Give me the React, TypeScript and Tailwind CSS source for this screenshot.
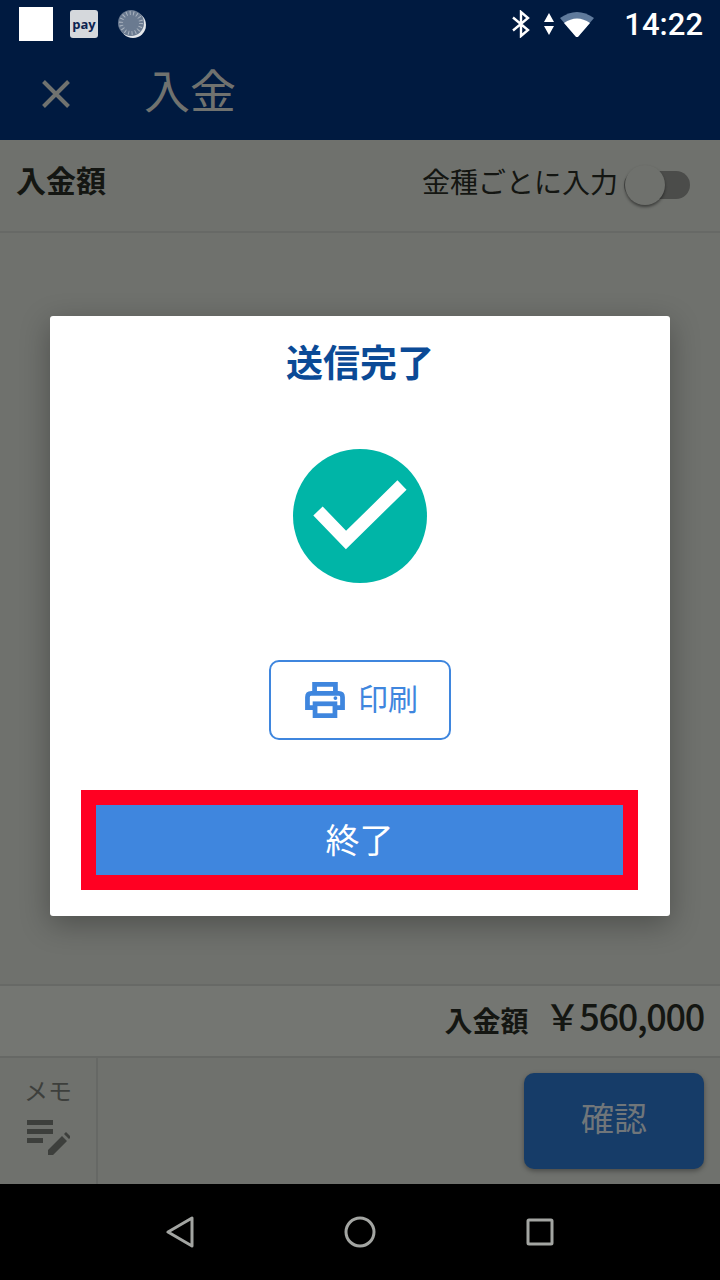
const jp = "font-['Noto_Sans_CJK_JP',sans-serif]";

function StatusBar() {
  return (
    <div className="h-12 flex items-center pl-[19px] pr-[17px]">
      <div className="w-[34px] h-[34px] bg-white" />
      <div className="ml-[17px] w-7 h-7 rounded-[3px] bg-[#d5d8dc] flex items-center justify-center">
        <span className="font-['Open_Sans',sans-serif] font-bold text-[13px] leading-none text-[#0b2350]">pay</span>
      </div>
      <svg className="ml-[20px]" width="28" height="28" viewBox="0 0 28 28">
        <circle cx="15" cy="15" r="13" fill="#e4e7ea" />
        <circle cx="13" cy="13" r="13" fill="#6a7a90" />
        <circle cx="13" cy="13" r="10" fill="none" stroke="#aab3bf" strokeWidth="4" strokeDasharray="1 2.5" />
      </svg>
      <div className="ml-auto flex items-center">
        <svg width="20" height="28" viewBox="0 0 20 28" fill="none" stroke="#fff" strokeWidth="2.4">
          <path d="M2 7.5 L17 20 L10 26 V2 L17 8 L2 20.5" />
        </svg>
        <svg className="ml-[12px]" width="12" height="24" viewBox="0 0 12 24" fill="#fff">
          <path d="M6 1 L11 10 H1 Z M1 14 H11 L6 23 Z" />
        </svg>
        <svg className="ml-[5px]" width="34" height="26" viewBox="0 0 34 26">
          <path d="M0 7 Q17 -5 34 7 L17 27 Z" fill="#5f7a9c" />
          <path d="M4 12 Q17 3 30 12 L17 27 Z" fill="#fff" />
        </svg>
        <span className="ml-[30px] font-['Roboto',sans-serif] font-medium text-[31px] leading-none text-white">14:22</span>
      </div>
    </div>
  );
}

function PrinterIcon() {
  return (
    <svg width="40" height="36" viewBox="0 0 42 38" fill="none">
      <path d="M10 11 V2.5 H32 V11" stroke="#3f86de" strokeWidth="5" />
      <path d="M9 27 H2.5 V16 Q2.5 12 6.5 12 H35.5 Q39.5 12 39.5 16 V27 H33" stroke="#3f86de" strokeWidth="5" />
      <rect x="10.5" y="23" width="21" height="12.5" stroke="#3f86de" strokeWidth="5" />
      <circle cx="32" cy="17" r="2" fill="#3f86de" />
    </svg>
  );
}

function CompleteDialog() {
  return (
    <div className="absolute left-[50px] top-[316px] w-[620px] h-[600px] bg-white rounded-[3px] shadow-[0_8px_30px_rgba(0,0,0,0.3)] flex flex-col items-center">
      <h2 className="mt-[18px] text-[37px] leading-[54px] font-bold text-[#0b4a96]">送信完了</h2>
      <div className="mt-[61px] w-[134px] h-[134px] rounded-full bg-[#00b5a7] flex items-center justify-center">
        <svg width="94" height="72" viewBox="0 0 94 72" fill="none" stroke="#fff" strokeWidth="13">
          <path d="M5 31 L33 60 L89 5" />
        </svg>
      </div>
      <button className="mt-[77px] w-[182px] h-20 pl-[3px] rounded-[10px] border-2 border-[#3f86de] flex items-center justify-center gap-[13px] text-[#3f86de] text-[30px]">
        <PrinterIcon />
        <span className="pb-[6px]">印刷</span>
      </button>
      <div className="mt-[50px] ml-[-1px] w-[557px] h-[100px] border-[15px] border-[#ff0022] bg-[#3f86de] flex items-center justify-center pb-[4px] text-white text-[34px]">
        終了
      </div>
    </div>
  );
}

export default function App() {
  return (
    <div className={`${jp} relative w-[720px] h-[1280px] overflow-hidden flex flex-col bg-[#6f716d]`}>
      <header className="h-[140px] bg-[#001a40]">
        <StatusBar />
        <div className="h-[92px] flex items-center pl-[42px]">
          <svg width="28" height="28" viewBox="0 0 28 28" stroke="#70726f" strokeWidth="4">
            <path d="M1.5 1.5 L26.5 26.5 M26.5 1.5 L1.5 26.5" />
          </svg>
          <span className="ml-[74px] pb-[13px] text-[46px] leading-none text-[#70726f]">入金</span>
        </div>
      </header>

      <div className="h-[93px] border-b-2 border-[#676966] flex items-center justify-between pl-[16px] pr-[30px]">
        <span className="pb-[13px] text-[30px] font-bold text-[#141612]">入金額</span>
        <div className="flex items-center">
          <span className="pb-[9px] text-[28px] text-[#141612]">金種ごとに入力</span>
          <div className="relative ml-[6px] mb-[2px] w-[66px] h-7 rounded-full bg-[#4b4c4a]">
            <div className="absolute left-[1px] top-[-6px] w-10 h-10 rounded-full bg-[#6f716d] shadow-[0_2px_3px_rgba(0,0,0,0.45)]" />
          </div>
        </div>
      </div>

      <div className="flex-1 border-b-2 border-[#676966]" />

      <div className="h-[72px] bg-[#747672] border-b-2 border-[#666865] flex items-center justify-end pr-[16px] gap-[16px] text-[#141612]">
        <span className="pb-[2px] text-[28px] font-bold">入金額</span>
        <span className="pb-[12px] text-[36px] tracking-[-1.3px] font-medium">{'\uFFE5'}560,000</span>
      </div>

      <div className="h-[126px] flex">
        <div className="w-[98px] border-r-2 border-[#666865] flex flex-col items-center pt-[14px]">
          <span className="text-[24px] leading-[36px] text-[#3d3f3c]">メモ</span>
          <svg className="mt-[11px]" width="44" height="38" viewBox="0 0 44 38" fill="#3d3f3c">
            <rect x="1" y="1" width="26" height="5" />
            <rect x="1" y="10" width="26" height="5" />
            <rect x="1" y="19" width="16" height="5" />
            <path d="M22 31 L36 17 L41 22 L27 36 H22 Z M38 15 L40 13 L45 18 L43 20 Z" />
          </svg>
        </div>
        <div className="flex-1 flex items-start justify-end pt-[15px] pr-[16px]">
          <button className="w-[180px] h-24 rounded-[10px] pb-[6px] bg-[#163c68] shadow-[0_2px_5px_rgba(0,0,0,0.35)] text-[33px] text-[#70767a]">確認</button>
        </div>
      </div>

      <nav className="h-24 bg-black flex items-center">
        <svg className="ml-[166px]" width="28" height="32" viewBox="0 0 28 32" fill="none" stroke="#a3a5a2" strokeWidth="3" strokeLinejoin="round">
          <path d="M2 16 L26 2 V30 Z" />
        </svg>
        <svg className="ml-[150px]" width="32" height="32" viewBox="0 0 32 32" fill="none" stroke="#a3a5a2" strokeWidth="3">
          <circle cx="16" cy="16" r="14" />
        </svg>
        <svg className="ml-[150px]" width="28" height="28" viewBox="0 0 28 28" fill="none" stroke="#a3a5a2" strokeWidth="3" strokeLinejoin="round">
          <rect x="2" y="2" width="24" height="24" rx="1" />
        </svg>
      </nav>

      <CompleteDialog />
    </div>
  );
}
